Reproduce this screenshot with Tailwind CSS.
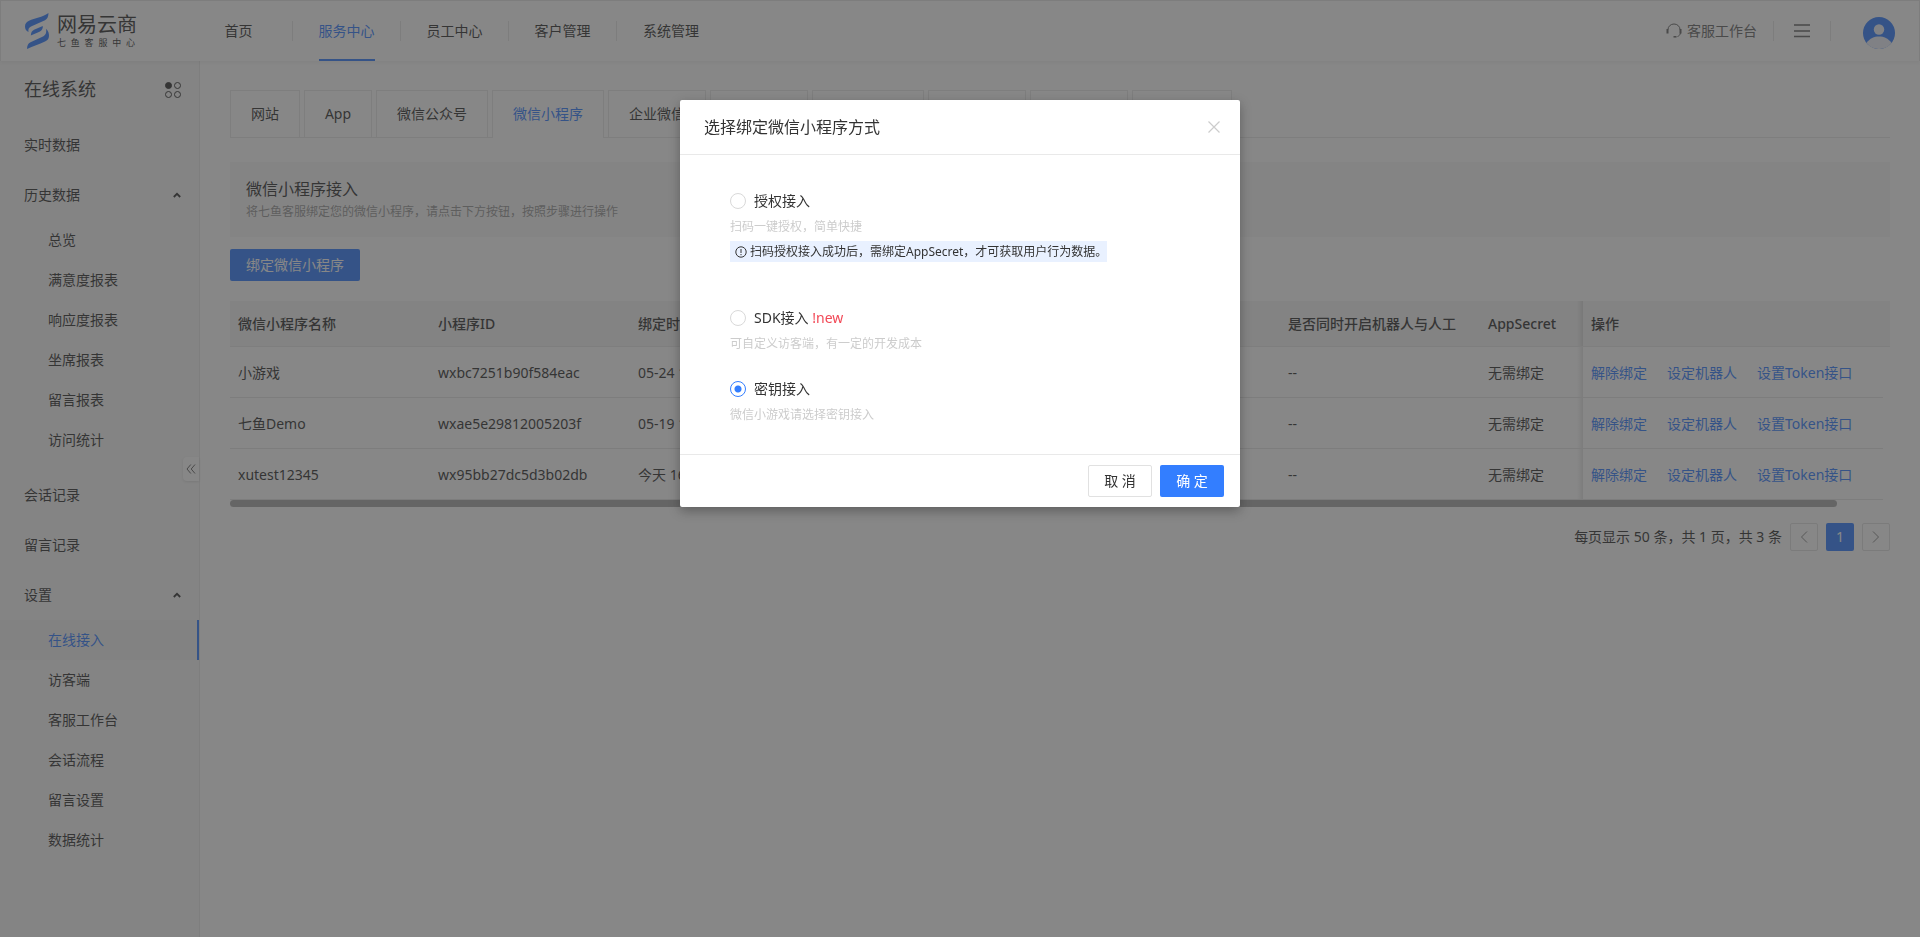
<!DOCTYPE html>
<html lang="zh-CN">
<head>
<meta charset="utf-8">
<meta name="viewport" content="width=device-width, initial-scale=1">
<title>网易云商 七鱼客服中心</title>
<script src="https://cdn.jsdelivr.net/npm/@tailwindcss/browser@4"></script>
</head>
<body class="bg-white text-sm text-[#333] font-['Noto_Sans','Noto_Sans_CJK_SC',sans-serif]">
<div class="flex min-h-screen flex-col">
  <header class="relative z-10 flex h-[61px] shrink-0 items-center border border-b-0 border-[#e6e6e6] bg-white shadow-[0_2px_4px_rgba(0,0,0,0.06)]">
    <a href="#" class="flex w-[184px] items-center gap-2 pl-6" aria-label="网易云商 七鱼客服中心">
      <svg class="h-[36px] w-6 shrink-0 text-[#337eff]" viewBox="0 0 24 36" fill="currentColor" aria-hidden="true">
        <path d="M23.500 0C23.300 3.500 22.500 6 20 7.200L6 13.500C3.800 14.600 3 16 3.500 19C1 18 0 16 0 13.500C0 10.500 1.500 9 4 7.800C10 5 17 4.500 23.500 0Z"/>
        <path d="M17.800 13L9 16.800C7 17.800 6 19.500 5.800 22.500L14.500 18.700C17 17.500 18 15.500 17.800 13Z"/>
        <path d="M21 15.800C23.500 18 24 20.500 24 23C23.800 26 22.500 27.300 20 28.500C14 31.500 8 33 2 36C2.200 32.500 3 30.500 5.500 29.300L18 23.500C20.500 22.300 21.800 20 21 15.800Z"/>
      </svg>
      <span class="flex w-20 flex-col">
        <span class="text-[20px] leading-[24px]">网易云商</span>
        <span class="w-[78px] text-[9px] leading-[12px] [text-align-last:justify]">七鱼客服中心</span>
      </span>
    </a>
    <nav class="flex h-full items-center" aria-label="主导航">
      <a href="#" class="flex h-5 w-[108px] items-center justify-center border-r border-[#e6e6e6]">首页</a>
      <a href="#" class="relative flex h-5 w-[108px] items-center justify-center border-r border-[#e6e6e6] text-[#337eff]" aria-current="page">服务中心<span class="absolute -bottom-5 left-[26px] h-[2px] w-14 bg-[#337eff]"></span></a>
      <a href="#" class="flex h-5 w-[108px] items-center justify-center border-r border-[#e6e6e6]">员工中心</a>
      <a href="#" class="flex h-5 w-[108px] items-center justify-center border-r border-[#e6e6e6]">客户管理</a>
      <a href="#" class="flex h-5 w-[108px] items-center justify-center">系统管理</a>
    </nav>
    <div class="ml-auto flex items-center pr-6 text-[#666]">
      <a href="#" class="flex h-5 items-center gap-1 border-r border-[#e6e6e6] pr-4">
        <svg class="h-4 w-[18px]" viewBox="0 0 18 16" fill="none" stroke="currentColor" aria-hidden="true">
          <path d="M3 6.500a6 5.500 0 0 1 12 0M15.500 10c-.5 2-1.500 3-3 3.500"/><path stroke-width="2" d="M2.500 6v4.500M15.500 6v4.500"/><path stroke-width="1.500" d="M8.500 13.800h3"/>
        </svg>客服工作台</a>
      <button type="button" aria-label="菜单" class="flex h-5 w-[57px] items-center justify-center border-r border-[#e6e6e6]">
        <svg class="h-4 w-4" viewBox="0 0 16 16" stroke="currentColor" stroke-width="1.500" aria-hidden="true"><path d="M0 2h16M0 8h16M0 13.500h16"/></svg>
      </button>
      <button type="button" aria-label="个人中心" class="ml-8 mt-1">
        <svg class="size-8" viewBox="0 0 32 32" aria-hidden="true">
          <circle cx="16" cy="16" r="16" fill="#337eff"/>
          <path fill="#eef0fb" d="M3.500 26C7 21 11 19.500 16 19.500S25 21 28.500 26A16 16 0 0 1 3.500 26Z"/>
          <circle cx="16" cy="12.500" r="5.200" fill="#eef0fb"/>
        </svg>
      </button>
    </div>
  </header>

  <div class="flex grow">
    <aside class="relative w-[200px] shrink-0 border-r border-[#e9e9e9] bg-[#f8f8f8]">
      <div class="flex h-[58px] items-center justify-between pl-6 pr-[18px]">
        <h2 class="text-[18px]">在线系统</h2>
        <svg class="size-4" viewBox="0 0 16 16" fill="none" stroke="#333" aria-hidden="true"><circle cx="3.500" cy="3.500" r="3" fill="#333"/><circle cx="12.500" cy="3.500" r="3"/><circle cx="3.500" cy="12.500" r="3"/><circle cx="12.500" cy="12.500" r="3"/></svg>
      </div>
      <nav class="mt-px" aria-label="侧边导航">
        <a href="#" class="flex h-[50px] items-center pl-6">实时数据</a>
        <a href="#" class="flex h-[50px] items-center justify-between pl-6 pr-[18px]">历史数据<svg class="h-2 w-2" viewBox="0 0 8 8" fill="none" stroke="currentColor" stroke-width="1.800" aria-hidden="true"><path d="M.8 6L4 2.800L7.200 6"/></svg></a>
        <div class="mb-[10px]">
          <a href="#" class="flex h-10 items-center pl-12">总览</a>
          <a href="#" class="flex h-10 items-center pl-12">满意度报表</a>
          <a href="#" class="flex h-10 items-center pl-12">响应度报表</a>
          <a href="#" class="flex h-10 items-center pl-12">坐席报表</a>
          <a href="#" class="flex h-10 items-center pl-12">留言报表</a>
          <a href="#" class="flex h-10 items-center pl-12">访问统计</a>
        </div>
        <a href="#" class="flex h-[50px] items-center pl-6">会话记录</a>
        <a href="#" class="flex h-[50px] items-center pl-6">留言记录</a>
        <a href="#" class="flex h-[50px] items-center justify-between pl-6 pr-[18px]">设置<svg class="h-2 w-2" viewBox="0 0 8 8" fill="none" stroke="currentColor" stroke-width="1.800" aria-hidden="true"><path d="M.8 6L4 2.800L7.200 6"/></svg></a>
        <div>
          <a href="#" class="flex h-10 items-center border-r-2 border-[#337eff] bg-[#f3f3f3] pl-12 text-[#337eff]" aria-current="page">在线接入</a>
          <a href="#" class="flex h-10 items-center pl-12">访客端</a>
          <a href="#" class="flex h-10 items-center pl-12">客服工作台</a>
          <a href="#" class="flex h-10 items-center pl-12">会话流程</a>
          <a href="#" class="flex h-10 items-center pl-12">留言设置</a>
          <a href="#" class="flex h-10 items-center pl-12">数据统计</a>
        </div>
      </nav>
      <button type="button" aria-label="收起侧边栏" class="absolute right-0 top-[396px] flex h-6 w-4 items-center justify-center rounded-l-sm bg-white shadow-[0_1px_3px_rgba(0,0,0,0.12)]">
        <svg class="h-[10px] w-[10px]" viewBox="0 0 10 10" fill="none" stroke="#666" aria-hidden="true"><path d="M4.800.5L1 5l3.800 4.500M9 .5L5.200 5L9 9.500"/></svg>
      </button>
    </aside>

    <main class="min-w-0 grow px-[30px] pt-[29px]">
      <div role="tablist" class="flex h-[48px] gap-1 border-b border-[#e9e9e9]">
        <button type="button" role="tab" class="h-[47px] w-[70px] border border-b-0 border-[#e9e9e9]">网站</button>
        <button type="button" role="tab" class="h-[47px] w-[68px] border border-b-0 border-[#e9e9e9]">App</button>
        <button type="button" role="tab" class="h-[47px] w-[112px] border border-b-0 border-[#e9e9e9]">微信公众号</button>
        <button type="button" role="tab" aria-selected="true" class="h-12 w-[112px] border border-b-0 border-[#e9e9e9] bg-white pb-px text-[#337eff]">微信小程序</button>
        <button type="button" role="tab" class="h-[47px] w-[98px] border border-b-0 border-[#e9e9e9]">企业微信</button>
        <button type="button" role="tab" class="h-[47px] w-[98px] border border-b-0 border-[#e9e9e9]">微信客服</button>
        <button type="button" role="tab" class="h-[47px] w-[112px] border border-b-0 border-[#e9e9e9]">易信公众号</button>
        <button type="button" role="tab" class="h-[47px] w-[98px] border border-b-0 border-[#e9e9e9]">新浪微博</button>
        <button type="button" role="tab" class="h-[47px] w-[98px] border border-b-0 border-[#e9e9e9]">服务链接</button>
        <button type="button" role="tab" class="h-[47px] w-[100px] border border-b-0 border-[#e9e9e9]">开放平台</button>
      </div>

      <section class="mt-6 h-[75px] bg-[#f8f8f8] px-4 pt-4">
        <h1 class="text-base leading-[22px]">微信小程序接入</h1>
        <p class="text-xs leading-6 text-[#999]">将七鱼客服绑定您的微信小程序，请点击下方按钮，按照步骤进行操作</p>
      </section>

      <button type="button" class="mt-3 block h-8 rounded-[2px] bg-[#337eff] px-4 text-white">绑定微信小程序</button>

      <table class="mt-5 w-full table-fixed border-separate border-spacing-0 text-left">
        <colgroup>
          <col class="w-[200px]"><col class="w-[200px]"><col class="w-[200px]"><col class="w-[450px]"><col class="w-[200px]"><col class="w-[103px]"><col><col class="w-[7px]">
        </colgroup>
        <thead>
          <tr class="h-[46px] bg-[#f4f4f4]">
            <th class="border-b border-[#e9e9e9] px-2 font-medium">微信小程序名称</th>
            <th class="border-b border-[#e9e9e9] px-2 font-medium">小程序ID</th>
            <th class="border-b border-[#e9e9e9] px-2 font-medium">绑定时间</th>
            <th class="border-b border-[#e9e9e9] px-2 font-medium"></th>
            <th class="border-b border-[#e9e9e9] px-2 font-medium whitespace-nowrap">是否同时开启机器人与人工</th>
            <th class="border-b border-[#e9e9e9] bg-[linear-gradient(to_left,rgba(0,0,0,0.1),transparent_6px)] px-2 font-medium">AppSecret</th>
            <th class="border-b border-[#e9e9e9] px-2 font-medium">操作</th>
            <th class="border-b border-[#e9e9e9]"></th>
          </tr>
        </thead>
        <tbody>
          <tr class="h-[51px]">
            <td class="border-b border-[#e6e6e6] px-2 pt-[2px]">小游戏</td>
            <td class="border-b border-[#e6e6e6] px-2 pt-[2px]">wxbc7251b90f584eac</td>
            <td class="border-b border-[#e6e6e6] px-2 pt-[2px]">05-24 11:20</td>
            <td class="border-b border-[#e6e6e6] px-2 pt-[2px]"></td>
            <td class="border-b border-[#e6e6e6] px-2 pt-[2px]">--</td>
            <td class="border-b border-[#e6e6e6] bg-[linear-gradient(to_left,rgba(0,0,0,0.1),transparent_6px)] px-2 pt-[2px]">无需绑定</td>
            <td class="border-b border-[#e6e6e6] px-2 pt-[2px]"><span class="flex gap-5 whitespace-nowrap text-[#337eff]"><a href="#">解除绑定</a><a href="#">设定机器人</a><a href="#">设置Token接口</a></span></td>
            <td></td>
          </tr>
          <tr class="h-[51px]">
            <td class="border-b border-[#e6e6e6] px-2 pt-[2px]">七鱼Demo</td>
            <td class="border-b border-[#e6e6e6] px-2 pt-[2px]">wxae5e29812005203f</td>
            <td class="border-b border-[#e6e6e6] px-2 pt-[2px]">05-19 15:32</td>
            <td class="border-b border-[#e6e6e6] px-2 pt-[2px]"></td>
            <td class="border-b border-[#e6e6e6] px-2 pt-[2px]">--</td>
            <td class="border-b border-[#e6e6e6] bg-[linear-gradient(to_left,rgba(0,0,0,0.1),transparent_6px)] px-2 pt-[2px]">无需绑定</td>
            <td class="border-b border-[#e6e6e6] px-2 pt-[2px]"><span class="flex gap-5 whitespace-nowrap text-[#337eff]"><a href="#">解除绑定</a><a href="#">设定机器人</a><a href="#">设置Token接口</a></span></td>
            <td></td>
          </tr>
          <tr class="h-[51px]">
            <td class="border-b border-[#e6e6e6] px-2 pt-[2px]">xutest12345</td>
            <td class="border-b border-[#e6e6e6] px-2 pt-[2px]">wx95bb27dc5d3b02db</td>
            <td class="border-b border-[#e6e6e6] px-2 pt-[2px]">今天 16:08</td>
            <td class="border-b border-[#e6e6e6] px-2 pt-[2px]"></td>
            <td class="border-b border-[#e6e6e6] px-2 pt-[2px]">--</td>
            <td class="border-b border-[#e6e6e6] bg-[linear-gradient(to_left,rgba(0,0,0,0.1),transparent_6px)] px-2 pt-[2px]">无需绑定</td>
            <td class="border-b border-[#e6e6e6] px-2 pt-[2px]"><span class="flex gap-5 whitespace-nowrap text-[#337eff]"><a href="#">解除绑定</a><a href="#">设定机器人</a><a href="#">设置Token接口</a></span></td>
            <td></td>
          </tr>
        </tbody>
      </table>
      <div class="mr-[53px] h-[7px] rounded-full bg-[#aaa]"></div>

      <nav class="mt-4 flex items-center justify-end gap-2" aria-label="分页">
        <span>每页显示 50 条，共 1 页，共 3 条</span>
        <button type="button" aria-label="上一页" class="flex size-7 items-center justify-center rounded-[2px] border border-[#e1e1e1]"><svg class="h-3 w-2" viewBox="0 0 8 12" fill="none" stroke="#888" aria-hidden="true"><path d="M7 .5L1.500 6L7 11.500"/></svg></button>
        <button type="button" aria-current="page" class="flex size-7 items-center justify-center rounded-[2px] bg-[#337eff] text-white">1</button>
        <button type="button" aria-label="下一页" class="flex size-7 items-center justify-center rounded-[2px] border border-[#e1e1e1]"><svg class="h-3 w-2" viewBox="0 0 8 12" fill="none" stroke="#888" aria-hidden="true"><path d="M1 .5L6.500 6L1 11.500"/></svg></button>
      </nav>
    </main>
  </div>
</div>

<div class="fixed inset-0 z-20 flex items-start justify-center bg-[rgba(55,55,55,0.6)] pt-[100px]">
  <form role="dialog" aria-modal="true" aria-labelledby="dialog-title" class="w-[560px] rounded-[2px] bg-white shadow-[0_4px_12px_rgba(0,0,0,0.3)]">
    <div class="flex h-[55px] items-center justify-between border-b border-[#e9e9e9] pl-6 pr-5">
      <h2 id="dialog-title" class="text-base">选择绑定微信小程序方式</h2>
      <button type="button" aria-label="关闭"><svg class="size-3" viewBox="0 0 12 12" fill="none" stroke="#ccc" stroke-width="1.200" aria-hidden="true"><path d="M.5.500l11 11M11.500.500l-11 11"/></svg></button>
    </div>
    <div class="h-[299px] px-[50px] pt-[34px]">
      <label class="flex h-6 items-center gap-2"><input type="radio" name="mode" class="size-4 appearance-none rounded-full border border-[#d9d9d9] bg-white">授权接入</label>
      <p class="mt-1 text-xs leading-5 text-[#ccc]">扫码一键授权，简单快捷</p>
      <p class="mt-1 flex h-[21px] w-fit items-center gap-[3px] bg-[#e9f1ff] pl-[5px] text-xs">
        <svg class="size-3" viewBox="0 0 12 12" fill="none" stroke="currentColor" aria-hidden="true"><circle cx="6" cy="6" r="5.200"/><path d="M6 3v4M6 8v1.200"/></svg>
        扫码授权接入成功后，需绑定AppSecret，才可获取用户行为数据。</p>
      <label class="mt-11 flex h-6 items-center gap-2"><input type="radio" name="mode" class="size-4 appearance-none rounded-full border border-[#d9d9d9] bg-white"><span>SDK接入 <span class="text-[#f24957]">!new</span></span></label>
      <p class="mt-1 text-xs leading-5 text-[#ccc]">可自定义访客端，有一定的开发成本</p>
      <label class="mt-[23px] flex h-6 items-center gap-2"><input type="radio" name="mode" checked class="size-4 appearance-none rounded-full border border-[#337eff] bg-[radial-gradient(circle,#337eff_3px,white_4px)]">密钥接入</label>
      <p class="mt-1 text-xs leading-5 text-[#ccc]">微信小游戏请选择密钥接入</p>
    </div>
    <div class="flex h-[53px] items-center justify-end gap-2 border-t border-[#e9e9e9] px-4">
      <button type="button" class="h-8 w-16 rounded-[2px] border border-[#e1e1e1]">取 消</button>
      <button type="button" class="h-8 w-16 rounded-[2px] bg-[#337eff] text-white">确 定</button>
    </div>
  </form>
</div>
</body>
</html>
